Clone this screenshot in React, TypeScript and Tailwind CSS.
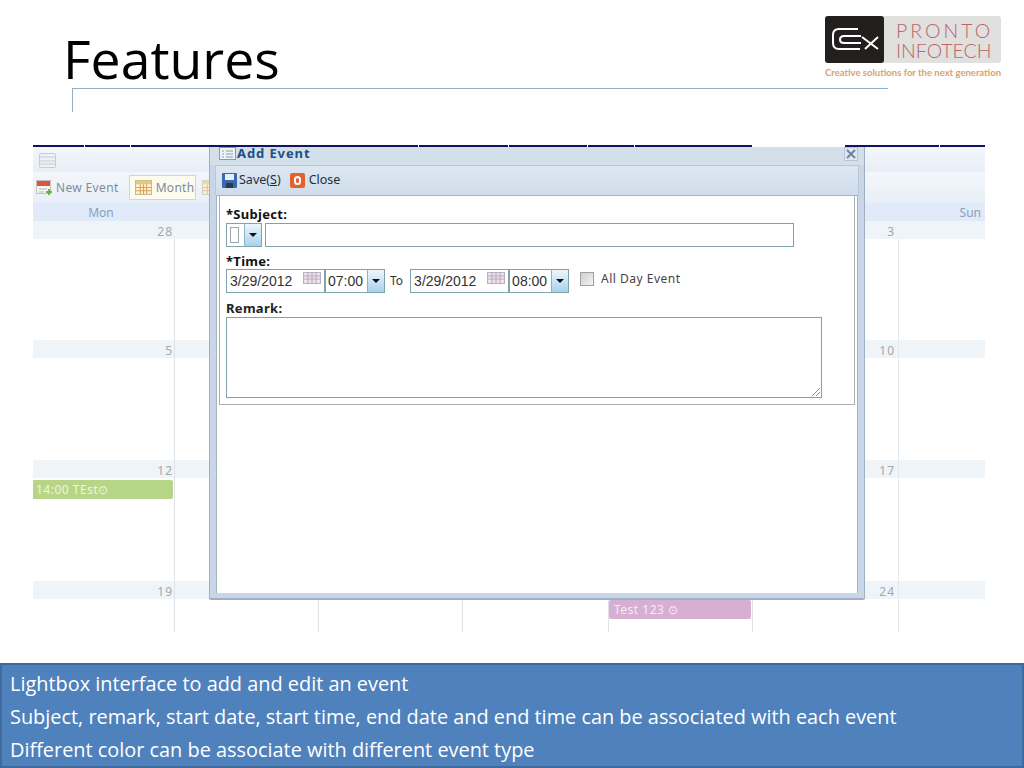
const weeks = [
  { h: "h-[119px]", nums: ["28", "", "", "", "", "3"] },
  { h: "h-[120px]", nums: ["5", "", "", "", "", "10"] },
  { h: "h-[121px]", nums: ["12", "", "", "", "", "17"] },
  { h: "h-[51px]", nums: ["19", "", "", "", "", "24"] },
];

const cols = ["w-[142px]", "w-[144px]", "w-[144px]", "w-[146px]", "w-[144px]", "w-[146px]", "w-[86px]"];

function Logo() {
  return (
    <div className="w-[176px] mt-[16px] font-['Lato',sans-serif]">
      <div className="flex h-[47px] rounded-[3px] bg-[#e0e0de]">
        <div className="w-[59px] rounded-[3px] bg-[#231f1e] flex items-center justify-center">
          <svg width="59" height="47" viewBox="0 0 59 47" fill="none" stroke="#fff" strokeWidth="2">
            <path d="M33 13H14q-6 0-6 6v8q0 6 6 6h21" />
            <path d="M36 20H19q-4 0-4 3.500t4 3.500h17" />
            <path d="M37 21l16 12M40 33l13-12" />
          </svg>
        </div>
        <div className="flex-1 pl-[12px] pt-[5px] text-[#bd6468] font-light text-[19.500px] leading-[20px]">
          <div className="tracking-[3px]">PRONTO</div>
          <div>INFOTECH</div>
        </div>
      </div>
      <div className="mt-[4px] text-[9.500px] leading-[11px] font-bold text-[#d9a36b] whitespace-nowrap">
        Creative solutions for the next generation
      </div>
    </div>
  );
}

function CalIcon({ className }: { className: string }) {
  return (
    <svg className={className} viewBox="0 0 16 14">
      <rect x="0.500" y="0.500" width="15" height="13" fill="#fdf3d0" stroke="#c9b98a" />
      <rect x="1" y="1" width="14" height="3" fill="#e8c878" />
      <path d="M1 7h14M1 10h14M5 4v9M8 4v9M11 4v9" stroke="#d8a060" strokeWidth="1" />
    </svg>
  );
}

function NewEventIcon() {
  return (
    <svg className="w-[17px] h-[16px]" viewBox="0 0 17 16">
      <rect x="0.500" y="0.500" width="14" height="13" fill="#f6f6f2" stroke="#c4c4bc" />
      <rect x="1" y="1" width="13" height="5" fill="#d9573f" />
      <path d="M3 9h8M3 12h5" stroke="#b8b8b0" />
      <path d="M13 9v6M10 12h6" stroke="#6fae4a" strokeWidth="2" />
    </svg>
  );
}

function Caret() {
  return (
    <div className="w-[17px] h-full flex items-center justify-center border-l border-[#8fb3c4] bg-gradient-to-b from-[#eef6fb] to-[#a8d2ec]">
      <div className="w-0 h-0 border-x-[4px] border-x-transparent border-t-[4px] border-t-[#111]" />
    </div>
  );
}

function DateField({ value }: { value: string }) {
  return (
    <div className="flex items-center justify-between w-[99px] h-[24px] border border-[#7fa3ad] pl-[3px] pr-[3px] text-[14px] text-[#333] font-['Liberation_Sans',sans-serif]">
      <span>{value}</span>
      <svg className="w-[18px] h-[12px] mb-[6px]" viewBox="0 0 18 12">
        <rect x="0.500" y="0.500" width="17" height="11" fill="#e8e4ee" stroke="#b8b0c4" />
        <path d="M1 4h16M1 7h16M5 1v10M9 1v10M13 1v10" stroke="#c4a8b8" />
      </svg>
    </div>
  );
}

function TimeField({ value }: { value: string }) {
  return (
    <div className="flex items-center justify-between w-[60px] h-[24px] border border-[#7fa3ad] pl-[2px] text-[14px] text-[#333] font-['Liberation_Sans',sans-serif]">
      <span>{value}</span>
      <Caret />
    </div>
  );
}

function Dialog() {
  return (
    <div className="absolute left-[176px] top-[2px] w-[656px] h-[453px] flex flex-col bg-[#c9d6e8] border-x border-b-2 border-[#9fb0c4] rounded-b-[2px] font-['Noto_Sans',sans-serif]">
      <div className="h-[18px] shrink-0 flex items-start justify-between pl-[9px] pr-[6px] bg-[#d3dfe9]">
        <div className="flex items-center gap-[1px]">
          <svg className="w-[17px] h-[13px]" viewBox="0 0 17 13" fill="none">
            <rect x="0.500" y="0.500" width="16" height="12" fill="#eef3f7" stroke="#8b9aa8" />
            <path d="M3 4h2M7 4h7M3 7h2M7 7h7M3 10h2M7 10h7" stroke="#8b9aa8" />
          </svg>
          <span className="text-[13px] leading-[13px] font-bold tracking-[0.900px] text-[#1f4f86]">Add Event</span>
        </div>
        <div className="w-[14px] h-[14px] flex items-center justify-center bg-[#dfe8f0] border border-[#b5c5d5] text-[#6d84a0]">
          <svg className="w-[10px] h-[10px]" viewBox="0 0 10 10" stroke="currentColor" strokeWidth="2">
            <path d="M1 1l8 8M9 1l-8 8" />
          </svg>
        </div>
      </div>
      <div className="mx-[5px] h-[30px] shrink-0 flex items-center pl-[6px] gap-[9px] bg-gradient-to-b from-[#dce7f2] to-[#cfdcea] border-t border-x border-[#b6c7d6] text-[12.500px] text-[#26303a]">
        <div className="flex items-center gap-[2px]">
          <svg className="w-[15px] h-[15px]" viewBox="0 0 15 15">
            <rect width="15" height="15" rx="1" fill="#3a67ad" />
            <rect x="3" y="1" width="9" height="6" fill="#e8eef6" />
            <rect x="4" y="10" width="7" height="5" fill="#28384f" />
          </svg>
          <span>
            Save(<span className="underline">S</span>)
          </span>
        </div>
        <div className="flex items-center gap-[4px]">
          <div className="w-[15px] h-[15px] rounded-[2px] bg-[#e2622d] flex items-center justify-center">
            <div className="w-[7px] h-[9px] rounded-full border-2 border-white" />
          </div>
          <span>Close</span>
        </div>
      </div>
      <div className="flex-1 mx-[6px] mb-[5px] bg-white border border-[#a8b4bc] border-b-0 flex flex-col">
        <div className="mx-[2px] h-[209px] border border-[#a8b0b4] border-t-0 pl-[6px] pt-[11px]">
          <div className="text-[13px] leading-[15px] font-bold tracking-[0.300px] text-[#111]">*Subject:</div>
          <div className="flex gap-[3px] mt-[1px] h-[24px]">
            <div className="w-[36px] flex justify-between border border-[#7fa3ad]">
              <div className="w-[9px] h-[16px] mt-[3px] ml-[3px] border border-[#9aa8ac]" />
              <Caret />
            </div>
            <div className="w-[529px] border border-[#7fa3ad]" />
          </div>
          <div className="mt-[7px] text-[13px] leading-[15px] font-bold tracking-[0.300px] text-[#111]">*Time:</div>
          <div className="flex items-center h-[24px]">
            <DateField value="3/29/2012" />
            <TimeField value="07:00" />
            <span className="ml-[5px] mr-[7px] text-[12px] text-[#333]">To</span>
            <DateField value="3/29/2012" />
            <TimeField value="08:00" />
            <div className="ml-[11px] mb-[4px] w-[14px] h-[14px] border border-[#a0a0a0] bg-gradient-to-br from-[#d0d0d0] to-[#f4f4f4]" />
            <span className="ml-[7px] mb-[4px] text-[12px] tracking-[0.500px] text-[#444]">All Day Event</span>
          </div>
          <div className="mt-[8px] text-[13px] leading-[15px] font-bold tracking-[0.300px] text-[#222]">Remark:</div>
          <div className="relative mt-[1px] w-[596px] h-[81px] border border-[#7fa3ad]">
            <svg className="absolute right-0 bottom-0 w-[10px] h-[10px]" viewBox="0 0 10 10" stroke="#8a9a9a" fill="none">
              <path d="M1 9l8-8M5 9l4-4" />
            </svg>
          </div>
        </div>
      </div>
    </div>
  );
}

function Calendar() {
  const ticks = ["w-[52px]", "w-[46px]", "w-[288px]", "w-[90px]", "w-[79px]", "w-[47px]", "w-[118px]"];
  return (
    <div className="relative w-[952px] h-[487px] bg-white overflow-hidden font-['Noto_Sans',sans-serif]">
      <div className="flex h-[2px]">
        {ticks.map((t, i) => (
          <div key={i} className={`${t} h-full bg-[#0f1560] border-r border-white`} />
        ))}
        <div className="w-[92px] h-full" />
        <div className="w-[95px] h-full bg-[#0f1560] border-r border-white" />
        <div className="flex-1 h-full bg-[#0f1560]" />
      </div>
      <div className="h-[25px] pl-[6px] pt-[6px] bg-gradient-to-b from-[#f4f7fb] to-[#e7eef6]">
        <svg className="w-[17px] h-[15px]" viewBox="0 0 17 15" fill="#eef2f7" stroke="#c5ccd6">
          <rect x="0.500" y="0.500" width="16" height="14" rx="1" />
          <path d="M1 4h15M1 8h15M1 11h15" />
        </svg>
      </div>
      <div className="h-[32px] flex items-center pl-[3px] bg-gradient-to-b from-[#f3f6fb] to-[#e9eff8] text-[12px] text-[#7f8b99] border-b border-[#e4ebf3]">
        <NewEventIcon />
        <span className="ml-[3px] tracking-[0.350px]">New Event</span>
        <div className="ml-[10px] shrink-0 h-[25px] w-[67px] flex items-center gap-[4px] pl-[5px] bg-[#fcfbef] border border-[#d8d6bf]">
          <CalIcon className="w-[17px] h-[15px]" />
          <span className="tracking-[0.300px]">Month</span>
        </div>
        <CalIcon className="ml-[6px] w-[17px] h-[15px] shrink-0 opacity-60" />
      </div>
      <div className="h-[17px] flex bg-[#e0eaf8] text-[12px] leading-[17px] text-[#8c9fb8]">
        <div className="w-[136px] text-center">Mon</div>
        <div className="flex-1 pr-[4px] text-right">Sun</div>
      </div>
      {weeks.map((w, i) => (
        <div key={i} className={w.h}>
          <div className="flex h-[18px] bg-[#eff4f9] text-[12px] leading-[21px] tracking-[1px] text-[#a2a8ae]">
            {cols.map((c, j) => (
              <div key={j} className={`${c} ${j === 5 ? "pr-[4px]" : "pr-[2px]"} text-right`}>
                {w.nums[j]}
              </div>
            ))}
          </div>
          <div className="flex h-full">
            {cols.map((c, j) => (
              <div key={j} className={`${c} ${j < 5 ? "border-r border-[#dfe3e8]" : ""} ${j === 5 ? "border-r border-[#e6e9ed]" : ""}`} />
            ))}
          </div>
        </div>
      ))}
      <div className="absolute left-0 top-[335px] w-[140px] h-[19px] pl-[3px] rounded-r-[2px] bg-[#b6d587] text-[12px] leading-[19px] tracking-[0.500px] text-[#eef6e0]">
        14:00 TEst⊙
      </div>
      <div className="absolute left-[576px] top-[455px] w-[142px] h-[19px] pl-[5px] rounded-[2px] bg-[#d6afd2] text-[12px] leading-[19px] tracking-[0.500px] text-[#f6ecf5]">
        Test 123 ⊙
      </div>
      <Dialog />
    </div>
  );
}

export default function App() {
  return (
    <div className="w-[1024px] h-[768px] flex flex-col bg-white overflow-hidden">
      <div className="h-[88px] flex justify-between pl-[63px] pr-[23px]">
        <h1 className="mt-[23px] text-[53.500px] leading-[72px] text-black font-['Open_Sans',sans-serif]">Features</h1>
        <Logo />
      </div>
      <div className="ml-[72px] w-[816px] h-[24px] border-t border-l border-[#8fb0c6]" />
      <div className="ml-[33px] mt-[33px]">
        <Calendar />
      </div>
      <div className="mt-[31px] h-[105px] pl-[8px] pt-[2px] bg-[#4f81bd] border-2 border-[#3f6a9e] text-[19.900px] leading-[33px] text-white font-['Open_Sans',sans-serif]">
        <div>Lightbox interface to add and edit an event</div>
        <div>Subject, remark, start date, start time, end date and end time can be associated with each event</div>
        <div>Different color can be associate with different event type</div>
      </div>
    </div>
  );
}
